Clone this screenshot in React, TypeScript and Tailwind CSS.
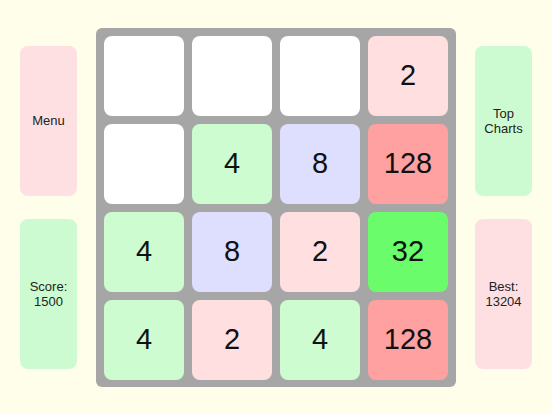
import React from 'react';

const TILE_COLORS: Record<number, string> = {
  0: 'bg-white',
  2: 'bg-[#ffdfe0]',
  4: 'bg-[#ccfcd0]',
  8: 'bg-[#dedffe]',
  32: 'bg-[#6afc6a]',
  128: 'bg-[#ffa1a1]',
};

const BOARD = [
  [0, 0, 0, 2],
  [0, 4, 8, 128],
  [4, 8, 2, 32],
  [4, 2, 4, 128],
];

const SidePanel: React.FC<{ color: string; children: React.ReactNode }> = ({ color, children }) => (
  <div className={`w-[57px] h-[150px] rounded-[8px] ${color} flex items-center justify-center text-center text-[13px] leading-[15px] text-[#222]`}>
    {children}
  </div>
);

const App: React.FC = () => {
  return (
    <div
      className="w-[552px] h-[414px] bg-[#fffeeb] flex items-center overflow-hidden"
      style={{ fontFamily: '"Liberation Sans", Arial, sans-serif' }}
    >
      <div className="flex flex-col gap-[23px] ml-[20px] mt-[0px]">
        <SidePanel color="bg-[#ffe0e2]">Menu</SidePanel>
        <SidePanel color="bg-[#cdfbd1]">
          Score:
          <br />
          1500
        </SidePanel>
      </div>

      <div className="ml-[19px] mb-[0px] w-[360px] h-[359px] bg-[#a6a6a6] rounded-[6px] p-[8px] grid grid-cols-4 gap-[8px] content-start">
        {BOARD.flat().map((v, i) => (
          <div
            key={i}
            className={`h-[80px] rounded-[8px] ${TILE_COLORS[v]} flex items-center justify-center text-[29px] text-[#111]`}
          >
            {v ? v : ''}
          </div>
        ))}
      </div>

      <div className="flex flex-col gap-[23px] ml-[19px]">
        <SidePanel color="bg-[#cdfbd1]">
          Top
          <br />
          Charts
        </SidePanel>
        <SidePanel color="bg-[#ffe0e2]">
          Best:
          <br />
          13204
        </SidePanel>
      </div>
    </div>
  );
};

export default App;
